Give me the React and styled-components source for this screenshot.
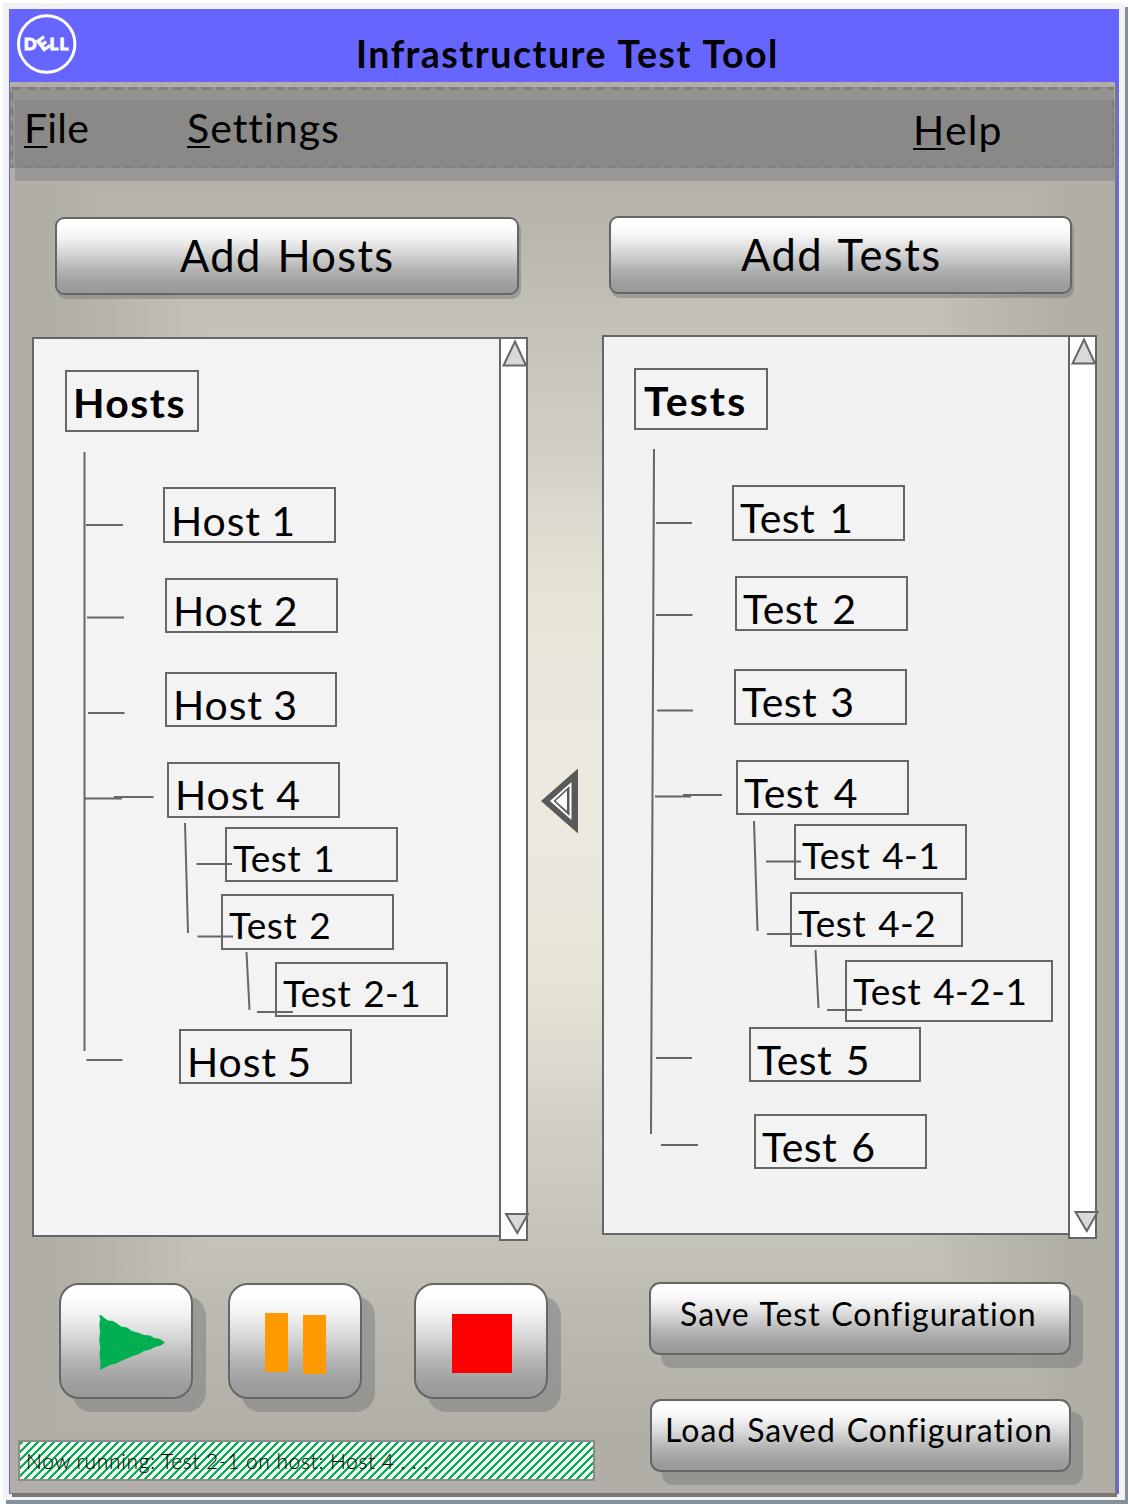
import React from "react";
import styled, { createGlobalStyle, css } from "styled-components";

const GlobalStyle = createGlobalStyle`
  * { box-sizing: border-box; }
  body { margin: 0; background: #fff; }
  button { font: inherit; color: inherit; padding: 0; margin: 0; }
`;

const LINE = "#666";

const Page = styled.div`
  width: 1128px;
  height: 1504px;
  padding: 3px;
  overflow: hidden;
  background: #fff;
  color: #000;
  font-family: Lato, "Open Sans", sans-serif;
  font-size: 41px;
  white-space: nowrap;
`;

const Frame = styled.div`
  width: 1122px;
  height: 1497px;
  padding: 6px;
  background: #f2f2f2;
  box-shadow: 3px 4px 0 #84919c;
`;

const Window = styled.div`
  width: 1110px;
  height: 1485px;
  padding-left: 1px;
  background: #6666ff;
`;

const TitleBar = styled.header`
  display: flex;
  align-items: flex-start;
  height: 73px;
  padding: 5px 0 0 7px;
`;

const Title = styled.h1`
  margin: 17px 0 0 279px;
  font-size: 37.5px;
  font-weight: 700;
  line-height: 46px;
  letter-spacing: 1.5px;
  word-spacing: 1px;
`;

const STOPS =
  "#b0aea6 0%, #b1aea6 8%, #b7b4ac 18%, #c5c2b9 36%, #d6d3ca 57%, #dbd9cd 60%, #e5e4d7 73%, #eae8dc 87%, #eceadf 100%";

const Body = styled.main`
  position: relative;
  isolation: isolate;
  width: 1105px;
  height: 1411px;
  padding-top: 5px;
  background:
    linear-gradient(to bottom, ${STOPS}) top / 100% 50% no-repeat,
    linear-gradient(to top, ${STOPS}) bottom / 100% 50% no-repeat;
  box-shadow: 2px 4px 0 #79776f;

  &::before,
  &::after {
    content: "";
    position: absolute;
    z-index: -1;
    top: 0;
    bottom: 0;
    width: 50%;
  }
  &::before {
    left: 0;
    background: linear-gradient(to right, ${STOPS});
    clip-path: polygon(0 0, 100% 50%, 0 100%);
  }
  &::after {
    right: 0;
    background: linear-gradient(to left, ${STOPS});
    clip-path: polygon(100% 0, 0 50%, 100% 100%);
  }
`;

const dash = (dir) => `repeating-linear-gradient(${dir}, #7f7f7f 0 9px, transparent 9px 14.6px)`;

const MenuBar = styled.nav`
  position: relative;
  isolation: isolate;
  display: flex;
  width: 1104px;
  height: 81px;
  padding-left: 14px;
  background:
    ${dash("to right")} 2px 0 / 100% 3px no-repeat,
    ${dash("to right")} 12px 100% / 100% 2px no-repeat,
    ${dash("to bottom")} 0 5px / 3px 100% no-repeat,
    ${dash("to bottom")} 100% 12px / 2px 100% no-repeat,
    rgba(128, 128, 128, 0.6);

  &::before {
    content: "";
    position: absolute;
    z-index: -1;
    left: 5px;
    top: 13px;
    width: 1102px;
    height: 81px;
    background: rgba(128, 128, 128, 0.5);
  }
`;

const MenuItem = styled.span`
  margin: ${(p) => p.$top}px 0 0 ${(p) => p.$left || 0}px;
  width: ${(p) => p.$width}px;
  line-height: 50px;
  letter-spacing: ${(p) => p.$track}px;

  &::first-letter {
    text-decoration: underline;
    text-decoration-thickness: 2px;
    text-underline-offset: 3px;
  }
`;

const glossy = css`
  border: 2px solid ${LINE};
  background: linear-gradient(#fff 0%, #fdfdfd 12%, #f2f2f2 26%, #d8d8d8 45%, #b4b4b4 68%, #a0a0a0 86%, #999 100%);
`;

const WideButton = styled.button`
  ${glossy}
  display: flex;
  align-items: flex-start;
  width: ${(p) => p.$width}px;
  height: ${(p) => p.$height}px;
  padding-left: ${(p) => p.$left}px;
  border-radius: ${(p) => p.$radius}px;
  box-shadow: ${(p) => p.$shadow} 0 rgba(128, 128, 128, 0.55);
  text-align: left;
  font-size: ${(p) => p.$size}px;
  line-height: ${(p) => p.$line}px;
  letter-spacing: ${(p) => p.$track}px;
  word-spacing: ${(p) => p.$word}px;
`;

const AddRow = styled.div`
  display: flex;
  gap: 90px;
  margin: 48px 0 0 45px;
  height: 79px;
  align-items: flex-start;

  & > :first-child { margin-top: 1px; }
`;

const Panels = styled.div`
  display: flex;
  align-items: flex-start;
  height: 906px;
  margin: 40px 0 0 22px;
`;

const Panel = styled.section`
  display: flex;
  align-items: flex-start;
  margin-top: ${(p) => p.$top}px;
`;

const Tree = styled.div`
  position: relative;
  width: ${(p) => p.$width}px;
  height: 900px;
  padding-top: 31px;
  border: 2px solid ${LINE};
  border-right: 0;
  background: ${(p) => p.$bg};
`;

const Node = styled.div`
  width: ${(p) => p.$w || 173}px;
  height: ${(p) => p.$h || 55}px;
  margin: ${(p) => p.$gap}px 0 0 ${(p) => p.$x}px;
  padding-left: ${(p) => p.$pad ?? 6}px;
  border: 2px solid ${LINE};
  background: #f3f3f3;
  font-size: ${(p) => (p.$small ? 37 : 41)}px;
  font-weight: ${(p) => (p.$root ? 700 : 400)};
  line-height: ${(p) => p.$line || (p.$small ? 57 : 62)}px;
  letter-spacing: ${(p) => p.$track ?? 0.5}px;
  word-spacing: ${(p) => p.$word ?? 2}px;
`;

const Connectors = styled.svg`
  position: absolute;
  left: -2px;
  top: -2px;
  pointer-events: none;
`;

const ScrollTrack = styled.div`
  display: flex;
  flex-direction: column;
  justify-content: space-between;
  width: 29px;
  height: 904px;
  padding: 1px 0 3px 2px;
  border: 2px solid ${LINE};
  background: #fff;

  svg { display: block; overflow: visible; }
`;

const Divider = styled.div`
  width: 74px;
  padding: 433px 0 0 12px;
`;

const Footer = styled.footer`
  display: flex;
  gap: 54px;
  margin: 41px 0 0 8px;
`;

const RunControls = styled.div`
  width: 577px;
`;

const Buttons = styled.div`
  display: flex;
  height: 158px;
  padding: 1px 0 0 41px;
`;

const RoundButton = styled.button`
  ${glossy}
  display: block;
  width: 134px;
  height: 116px;
  margin-right: ${(p) => p.$after || 0}px;
  border-radius: 20px;
  box-shadow: 13px 13px 0 rgba(128, 128, 128, 0.55);

  svg { display: block; }
`;

const Status = styled.div`
  height: 41px;
  padding-left: 6px;
  border: 2px solid #8b8b87;
  background: linear-gradient(135deg, #00b050 0 18.75%, #f4f4f4 18.75% 50%, #00b050 50% 68.75%, #f4f4f4 68.75%) 0 0 / 8px 8px;
  color: #000;
  font-size: 21px;
  font-weight: 300;
  line-height: 37px;
  letter-spacing: 0.65px;
  word-spacing: -0.5px;
`;

const SaveControls = styled.div`
  display: flex;
  flex-direction: column;
  gap: 44px;

  & > :last-child { margin-left: 1px; }
`;

const Logo = () => (
  <svg width="60" height="60" viewBox="17 14 60 60" fill="#fff">
    <circle cx="46.7" cy="44" r="28.2" fill="none" stroke="#fff" strokeWidth="3" />
    <g fontFamily="Lato, sans-serif" fontWeight="900" fontSize="17" stroke="#fff" strokeWidth="0.9">
      <text x="23.8" y="50">D</text>
      <text x="-5.2" y="6.4" transform="translate(43.2 43.8) rotate(-36)" fontSize="17.5">E</text>
      <text x="49.4" y="50">L</text>
      <text x="59.4" y="50">L</text>
    </g>
  </svg>
);

const Arrow = ({ down, shift = 0 }) => (
  <svg width="24" height="25" viewBox="0 0 24 25">
    <path
      d={down ? `M${1 + shift} 3H${23 + shift}L${12.3 + shift} 22Z` : "M12 1.5L23 25.500H0.500Z"}
      fill="#d9d9d9"
      stroke={LINE}
      strokeWidth="2"
    />
  </svg>
);

const HOSTS = [
  { t: "Hosts", x: 33, gap: 0, w: 134, h: 62, root: true, line: 62, pad: 6, track: 1.4 },
  { t: "Host 1", x: 131, gap: 55, h: 56, line: 64, track: 0.9, word: -1 },
  { t: "Host 2", x: 133, gap: 35, track: 0.9, word: -0.5 },
  { t: "Host 3", x: 133, gap: 39, w: 172, track: 0.9, word: -1 },
  { t: "Host 4", x: 135, gap: 35, h: 56, track: 0.9, word: 0 },
  { t: "Test 1", x: 193, gap: 9, small: true },
  { t: "Test 2", x: 189, gap: 12, h: 56, small: true },
  { t: "Test 2-1", x: 243, gap: 12, small: true },
  { t: "Host 5", x: 147, gap: 12, track: 0.9, word: -1 },
];

const TESTS = [
  { t: "Tests", x: 32, gap: 0, w: 134, h: 62, root: true, line: 62, pad: 8, track: 2.1 },
  { t: "Test 1", x: 130, gap: 55, h: 56, word: 3 },
  { t: "Test 2", x: 133, gap: 35, word: 3 },
  { t: "Test 3", x: 132, gap: 38, h: 56, word: 2 },
  { t: "Test 4", x: 134, gap: 35, word: 3.5 },
  { t: "Test 4-1", x: 192, gap: 9, h: 56, small: true },
  { t: "Test 4-2", x: 188, gap: 12, small: true },
  { t: "Test 4-2-1", x: 243, gap: 13, w: 208, h: 62, small: true },
  { t: "Test 5", x: 147, gap: 5, w: 172, word: 2.5 },
  { t: "Test 6", x: 152, gap: 32, word: 3 },
];

const HOST_LINES =
  "M84.5 452V1051M86 525H123M87 617.5H124M88 713H124.5M85 798.5H122M114 797H153.5M86.5 1060H122.5M185 823L188 933M196.5 864H232M197.5 936.5H233M246.5 952L249.5 1010M257 1012H293";
const TEST_LINES =
  "M654 449L651 1134M656 523H692M656 615H692.5M657 710.5H693M655 796.5H691M683 795H722M754 821L757.5 931M766 861.5H801M767 934H802M815.5 950L818.5 1008M827 1010H862M656 1058H692M661 1145H698";

const TreePanel = ({ top, width, bg, nodes, lines, box, shift }) => (
  <Panel $top={top}>
    <Tree $width={width} $bg={bg}>
      {nodes.map((n) => (
        <Node
          key={n.t}
          $x={n.x - 2}
          $gap={n.gap}
          $w={n.w}
          $h={n.h}
          $pad={n.pad}
          $line={n.line}
          $small={n.small}
          $root={n.root}
          $track={n.track}
          $word={n.word}
        >
          {n.t}
        </Node>
      ))}
      <Connectors width={width} height="900" viewBox={box}>
        <path d={lines} fill="none" stroke={LINE} strokeWidth="2" />
      </Connectors>
    </Tree>
    <ScrollTrack>
      <Arrow />
      <Arrow down shift={shift} />
    </ScrollTrack>
  </Panel>
);

export default function App() {
  return (
    <Page>
      <GlobalStyle />
      <Frame>
        <Window>
          <TitleBar>
            <Logo />
            <Title>Infrastructure Test Tool</Title>
          </TitleBar>
          <Body>
            <MenuBar>
              <MenuItem $top={16} $width={163} $track={0.2}>File</MenuItem>
              <MenuItem $top={16} $width={200} $track={1}>Settings</MenuItem>
              <MenuItem $top={18} $left={526} $width={120} $track={1.2}>Help</MenuItem>
            </MenuBar>
            <AddRow>
              <WideButton $width={464} $height={78} $left={123} $radius={9} $shadow="2px 4px" $size={43.5} $line={73} $track={1.3} $word={3.5}>
                Add Hosts
              </WideButton>
              <WideButton $width={463} $height={78} $left={130} $radius={9} $shadow="2px 4px" $size={43.5} $line={73} $track={1.5} $word={3}>
                Add Tests
              </WideButton>
            </AddRow>
            <Panels>
              <TreePanel top={2} width={467} bg="#f3f3f3" nodes={HOSTS} lines={HOST_LINES} box="32 337 467 900" shift={2} />
              <Divider>
                <svg width="38" height="66" viewBox="540 768 38 66">
                  <path d="M541 801L578 768.5V833.5Z" fill="#595959" />
                  <path d="M550 801L571.5 782V820Z" fill="#fff" />
                  <path d="M553.5 801L569.5 786V816Z" fill="#595959" />
                  <path d="M555.7 801L567 790.5V811Z" fill="#fff" />
                </svg>
              </Divider>
              <TreePanel top={0} width={466} bg="#f2f2f2" nodes={TESTS} lines={TEST_LINES} box="602 335 466 900" shift={2.5} />
            </Panels>
            <Footer>
              <RunControls>
                <Buttons>
                  <RoundButton $after={35} aria-label="Run">
                    <svg width="130" height="112" viewBox="61 1285 130 112">
                      <path
                        d="M99 1315.5L101 1315L105 1318.500L108 1320.500L113 1321L117 1323.500L121 1326.500L127 1327.500L132 1331L139 1333L144 1335L150 1335.500L154 1338L160 1339L165 1342.500L161 1345.500L155 1347L150 1349.500L144 1351L139 1354L133 1356L127 1358.500L121 1361L116 1363.500L110 1365L105 1367.500L100 1370L100.500 1362L99.500 1355L100.200 1348L99.200 1340L100 1332L99.300 1324L100.300 1319Z"
                        fill="#00b050"
                      />
                    </svg>
                  </RoundButton>
                  <RoundButton $after={52} aria-label="Pause">
                    <svg width="130" height="112" viewBox="230 1285 130 112">
                      <path d="M265 1313H288V1372H265ZM303 1315H326V1374H303Z" fill="#ff9900" />
                    </svg>
                  </RoundButton>
                  <RoundButton aria-label="Stop">
                    <svg width="130" height="112" viewBox="416 1285 130 112">
                      <path d="M452 1314H512V1373H452Z" fill="#f00" />
                    </svg>
                  </RoundButton>
                </Buttons>
                <Status>Now running: Test 2-1 on host: Host 4 . . .</Status>
              </RunControls>
              <SaveControls>
                <WideButton $width={422} $height={73} $left={29} $radius={11} $shadow="12px 13px" $size={32} $line={60} $track={1} $word={1.5}>
                  Save Test Configuration
                </WideButton>
                <WideButton $width={421} $height={73} $left={13} $radius={11} $shadow="12px 13px" $size={32} $line={58} $track={1.05} $word={1.5}>
                  Load Saved Configuration
                </WideButton>
              </SaveControls>
            </Footer>
          </Body>
        </Window>
      </Frame>
    </Page>
  );
}
